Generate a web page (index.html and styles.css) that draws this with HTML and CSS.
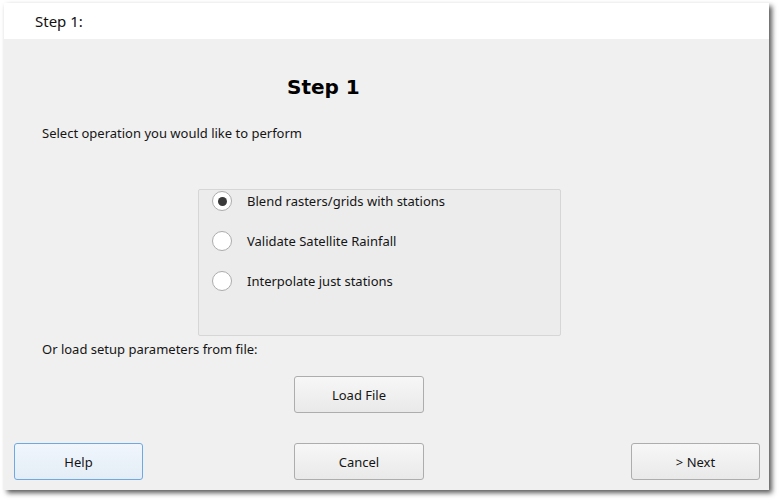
FILE: index.html
```html
<!DOCTYPE html>
<html>
<head>
<meta charset="utf-8">
<link rel="stylesheet" href="styles.css">
</head>
<body>
<div class="window">
  <div class="titlebar">Step 1:</div>
  <div class="content">
    <h1 class="heading">Step 1</h1>
    <p class="intro">Select operation you would like to perform</p>
    <div class="group">
      <label class="option"><span class="radio checked"></span><span>Blend rasters/grids with stations</span></label>
      <label class="option"><span class="radio"></span><span>Validate Satellite Rainfall</span></label>
      <label class="option"><span class="radio"></span><span>Interpolate just stations</span></label>
    </div>
    <p class="load-label">Or load setup parameters from file:</p>
    <div class="load-row"><button class="btn">Load File</button></div>
    <div class="footer">
      <button class="btn btn-default">Help</button>
      <button class="btn btn-cancel">Cancel</button>
      <button class="btn btn-next">&gt; Next</button>
    </div>
  </div>
</div>
</body>
</html>
```

FILE: styles.css
```css
html, body {
  margin: 0;
  padding: 0;
  background: #ffffff;
}
body {
  width: 782px;
  height: 504px;
  overflow: hidden;
  font-family: "Noto Sans", "Open Sans", sans-serif;
  font-size: 13px;
  color: #151515;
}
.window {
  margin: 3px 0 0 4px;
  width: 765px;
  height: 487px;
  background: #f0f0f0;
  box-shadow: 3px 3px 5px rgba(0,0,0,0.65);
  display: flex;
  flex-direction: column;
}
.titlebar {
  height: 36px;
  background: #ffffff;
  display: flex;
  align-items: center;
  padding-left: 31px;
  font-size: 15px;
  color: #111;
}
.content {
  flex: 1;
  display: flex;
  flex-direction: column;
}
.heading {
  margin: 35px 0 0 283px;
  font-family: "DejaVu Sans", sans-serif;
  font-weight: bold;
  font-size: 20px;
  line-height: 26px;
  color: #000;
}
.intro {
  margin: 25px 0 0 38px;
  line-height: 16px;
}
.group {
  margin: 48px 0 0 194px;
  width: 361px;
  height: 144px;
  border: 1px solid #d6d6d6;
  border-radius: 2px;
  background: #ececec;
  display: flex;
  flex-direction: column;
  padding-top: 1px;
  box-sizing: content-box;
}
.option {
  display: flex;
  align-items: center;
  height: 20px;
  margin-bottom: 20px;
  padding-left: 13px;
}
.radio {
  width: 20px;
  height: 20px;
  border: 1px solid #acacac;
  border-radius: 50%;
  background: #ffffff;
  box-sizing: border-box;
  margin-right: 15px;
  display: flex;
  align-items: center;
  justify-content: center;
}
.radio.checked::after {
  content: "";
  width: 9px;
  height: 9px;
  border-radius: 50%;
  background: #3a3a3a;
}
.load-label {
  margin: 5px 0 0 38px;
  line-height: 16px;
}
.load-row {
  margin: 19px 0 0 290px;
  display: flex;
}
.btn {
  width: 130px;
  height: 37px;
  border: 1px solid #adadad;
  border-radius: 3px;
  background: linear-gradient(#f7f7f7, #e9e9e9);
  font-family: "Noto Sans", "Open Sans", sans-serif;
  font-size: 13px;
  color: #151515;
  padding: 0;
  box-sizing: border-box;
}
.footer {
  margin-top: 30px;
  display: flex;
  padding: 0 9px 0 10px;
}
.btn-default {
  border-color: #6ea9e3;
  background: linear-gradient(#f0f6fc, #e4edf6);
  width: 129px;
}
.btn-cancel {
  margin-left: 151px;
}
.btn-next {
  margin-left: auto;
  width: 129px;
}
```
